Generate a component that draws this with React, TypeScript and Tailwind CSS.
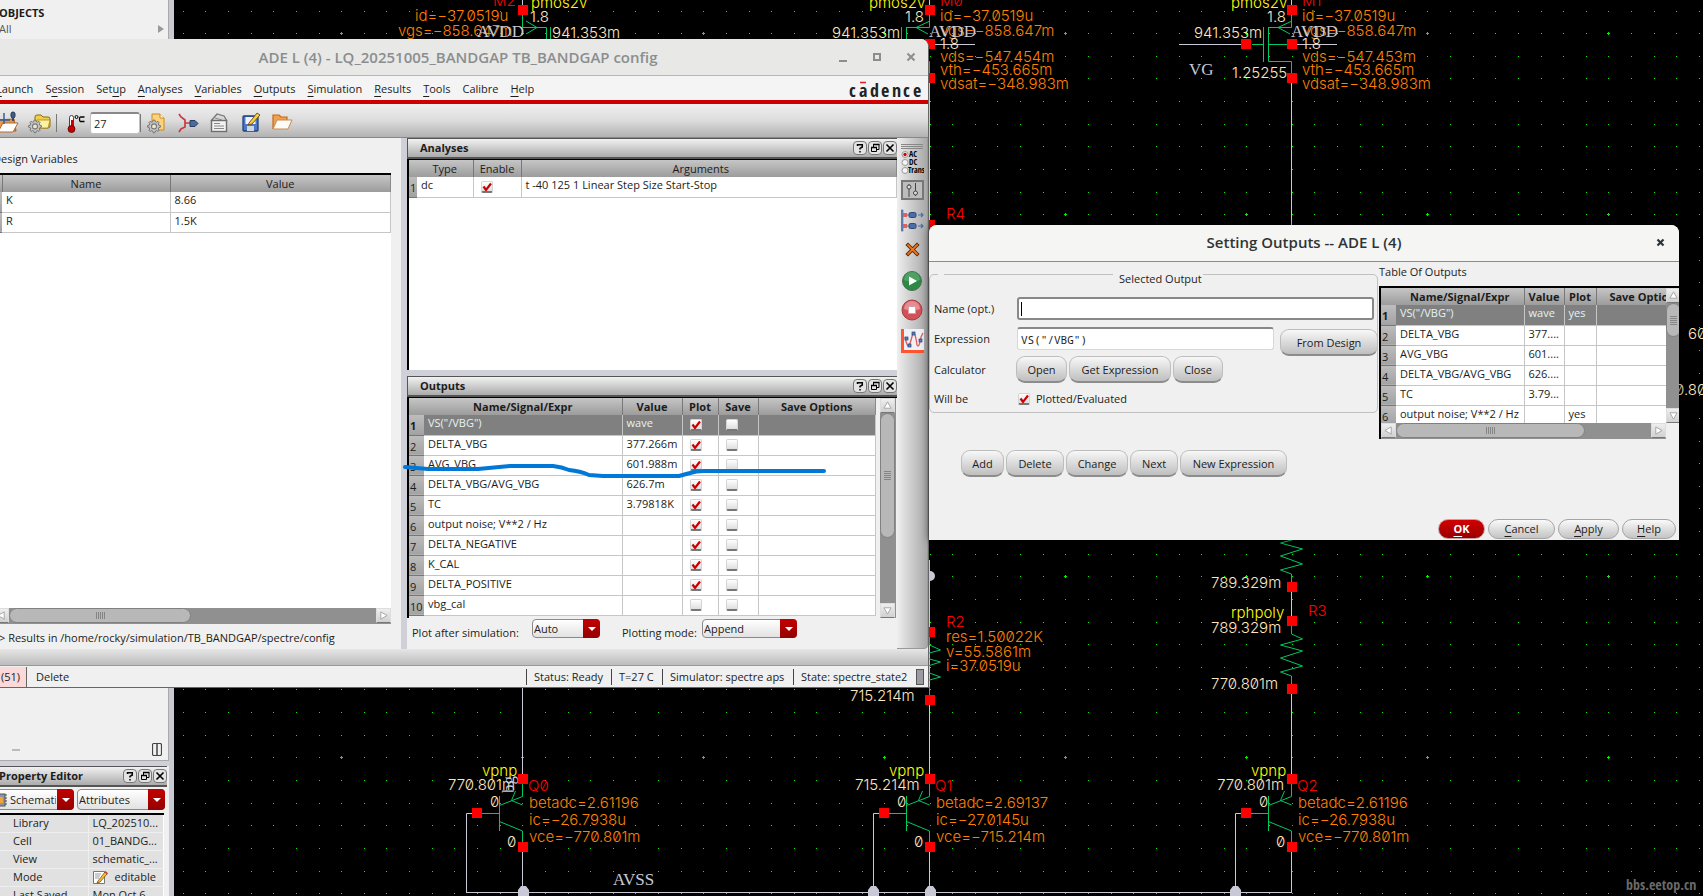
import React from "react";

const HEAD = "bg-gradient-to-b from-[#c6c6c6] to-[#9c9c9c]";
const UI = "font-['Open_Sans','Noto_Sans',sans-serif] text-[11px] leading-4 text-[#1c1c1c]";

/* ---------- schematic ---------- */

const WIRE = "#c8c8d6";
const NET = "#00c864";
const ORANGE = "#ff8000";
const CREAM = "#ffe4c0";
const PITCH = 22.63;

function gridPath() {
  let dots = "";
  let marks = "";
  for (let i = -7; i <= 60; i++) {
    for (let j = -1; j <= 38; j++) {
      const x = Math.round(341.2 + i * PITCH);
      const y = Math.round(33.2 + j * PITCH);
      dots += `M${x} ${y}h1v1h-1z`;
      if (i % 8 === 0 && j % 8 === 0) marks += `M${x - 1} ${y}h3v1h-3zM${x} ${y - 1}h1v3h-1z`;
    }
  }
  return dots + marks;
}

type LabelProps = { x: number; y: number; c: string; children: React.ReactNode };
function Label({ x, y, c, children }: LabelProps) {
  return (
    <text x={x} y={y} fill={c} className="font-['Inter','Noto_Sans',sans-serif] text-[15px] font-light [font-feature-settings:'zero']">
      {children}
    </text>
  );
}
function NetName({ x, y, children }: { x: number; y: number; children: string }) {
  return (
    <text x={x} y={y} fill={WIRE} className="font-['Liberation_Serif',serif] text-[17px]">
      {children}
    </text>
  );
}
function Pin({ x, y }: { x: number; y: number }) {
  return <rect x={x - 5} y={y - 5} width={10} height={10} fill="#ff0000" />;
}
function Dot({ x, y }: { x: number; y: number }) {
  return <path d={`M${x - 5} ${y + 6}v-7l3-4h5l3 4v7z`} fill={WIRE} />;
}
function Bipolar({ x, name, v, beta, ic, vce }: { x: number; name: string; v: string; beta: string; ic: string; vce: string }) {
  return (
    <g>
      <path
        d={`M${x + 0.5} 784V796.5L${x - 22.5} 805.5M${x - 22.5} 796V831M${x - 22.5} 821.5L${x + 0.5} 831V842M${x - 40} 813.5H${x - 22}M${x - 6.5} 791L${x - 10.5} 800.5L${x + 0.5} 805`}
        stroke={NET}
        fill="none"
      />
      <path d={`M${x - 50} 813.5H${x - 55.5}V892.5M${x + 0.5} 852V892`} stroke={WIRE} fill="none" />
      <Label x={x - 40} y={776} c="#ffff00">vpnp</Label>
      <Label x={x - 74} y={790} c={CREAM}>{v}</Label>
      <Label x={x - 32} y={807} c={CREAM}>0</Label>
      <Label x={x - 15} y={847} c={CREAM}>0</Label>
      <Label x={x + 6} y={791} c="#ff0000">{name}</Label>
      <Label x={x + 7} y={808} c={ORANGE}>{beta}</Label>
      <Label x={x + 7} y={825} c={ORANGE}>{ic}</Label>
      <Label x={x + 7} y={842} c={ORANGE}>{vce}</Label>
      <Pin x={x + 1} y={779} />
      <Pin x={x + 1} y={847} />
      <Pin x={x - 45} y={813} />
    </g>
  );
}
function Zigzag({ x, y }: { x: number; y: number }) {
  return (
    <path
      d={`M${x} ${y}V${y + 8}L${x + 11} ${y + 13}L${x - 11} ${y + 19}L${x + 11} ${y + 25}L${x - 11} ${y + 32}L${x + 11} ${y + 40}L${x - 11} ${y + 46}L${x} ${y + 50}V${y + 59}`}
      stroke={NET}
      fill="none"
    />
  );
}
function Mos({ x, name, vds }: { x: number; name: string; vds: string }) {
  return (
    <g>
      <path
        d={`M${x - 0.5} 15V27.5H${x - 23.5}M${x - 23.5} 27V61.5H${x - 0.5}V73M${x - 28.5} 27V62M${x - 40} 44.5H${x - 28}M${x - 23} 44.5H${x - 4}M${x} 21L${x - 14} 27.5L${x - 2} 34`}
        stroke={NET}
        fill="none"
      />
      <path d={`M${x - 0.5} 0V6M${x - 113} 44.5H${x - 50}M${x + 5} 44.5H${x + 45}`} stroke={WIRE} fill="none" />
      <Label x={x - 61} y={8} c="#ffff00">pmos2v</Label>
      <Label x={x - 25} y={22} c={CREAM}>1.8</Label>
      <Label x={x - 98} y={38} c={CREAM}>941.353m</Label>
      <Label x={x + 10} y={6} c="#ff0000">{name}</Label>
      <Label x={x + 10} y={21} c={ORANGE}>id=−37.0519u</Label>
      <Label x={x + 10} y={36} c={ORANGE}>vgs=−858.647m</Label>
      <NetName x={x - 1} y={37}>AVDD</NetName>
      <Label x={x + 10} y={49} c={CREAM}>1.8</Label>
      <Label x={x + 10} y={62} c={ORANGE}>{vds}</Label>
      <Label x={x + 10} y={75} c={ORANGE}>vth=−453.665m</Label>
      <Label x={x + 10} y={89} c={ORANGE}>vdsat=−348.983m</Label>
      <Pin x={x} y={10} />
      <Pin x={x} y={44} />
      <Pin x={x} y={78} />
      <Pin x={x - 46} y={44} />
    </g>
  );
}

function Schematic() {
  return (
    <svg className="h-full w-full" aria-label="Schematic">
      <g transform="translate(-174 0)">
        <path d={gridPath()} fill="#00f000" shapeRendering="crispEdges" />
        <path
          d="M522.5 0V6M522.5 680V776M929.5 83V222M929.5 560V776M1291.5 83V540M1291.5 592V616M1291.5 694V776M466 892.5H1292"
          stroke={WIRE}
          fill="none"
        />
        <path d="M522.5 15V27.5H546.5V60M550.5 27V60M526 21L537 27.5L526 34" stroke={NET} fill="none" />
        <Label x={493} y={6} c="#ff0000">M2</Label>
        <Label x={415} y={21} c={ORANGE}>id=−37.0519u</Label>
        <Label x={398} y={36} c={ORANGE}>vgs=−858.647m</Label>
        <NetName x={477} y={37}>AVDD</NetName>
        <Label x={531} y={8} c="#ffff00">pmos2v</Label>
        <Label x={530} y={22} c={CREAM}>1.8</Label>
        <Label x={552} y={38} c={CREAM}>941.353m</Label>
        <Pin x={523} y={10} />
        <Mos x={930} name="M0" vds="vds=−547.454m" />
        <Mos x={1292} name="M1" vds="vds=−547.453m" />
        <NetName x={1189} y={75}>VG</NetName>
        <Label x={1232} y={78} c={CREAM}>1.25255</Label>
        <Label x={946} y={219} c="#ff0000">R4</Label>
        <Pin x={930} y={225} />

        <circle cx={930} cy={576} r={5} fill={WIRE} />
        <Zigzag x={929.5} y={637} />
        <Label x={946} y={627} c="#ff0000">R2</Label>
        <Label x={946} y={642} c={ORANGE}>res=1.50022K</Label>
        <Label x={946} y={657} c={ORANGE}>v=55.5861m</Label>
        <Label x={946} y={671} c={ORANGE}>i=37.0519u</Label>
        <Pin x={930} y={632} />
        <Pin x={930} y={700} />
        <Label x={850} y={701} c={CREAM}>715.214m</Label>

        <Zigzag x={1291.5} y={524} />
        <Zigzag x={1291.5} y={626} />
        <Label x={1211} y={588} c={CREAM}>789.329m</Label>
        <Label x={1231} y={618} c="#ffff00">rphpoly</Label>
        <Label x={1211} y={633} c={CREAM}>789.329m</Label>
        <Label x={1308} y={616} c="#ff0000">R3</Label>
        <Label x={1211} y={689} c={CREAM}>770.801m</Label>
        <Pin x={1292} y={587} />
        <Pin x={1292} y={621} />
        <Pin x={1292} y={689} />

        <Bipolar x={522} name="Q0" v="770.801m" beta="betadc=2.61196" ic="ic=−26.7938u" vce="vce=−770.801m" />
        <Bipolar x={929} name="Q1" v="715.214m" beta="betadc=2.69137" ic="ic=−27.0145u" vce="vce=−715.214m" />
        <Bipolar x={1291} name="Q2" v="770.801m" beta="betadc=2.61196" ic="ic=−26.7938u" vce="vce=−770.801m" />
        <g transform="translate(514 793) rotate(-90)">
          <NetName x={0} y={0}>bg</NetName>
        </g>
        <NetName x={613} y={885}>AVSS</NetName>
        <Dot x={523} y={891} />
        <Dot x={873} y={891} />
        <Dot x={930} y={891} />
        <Dot x={1235} y={891} />
        <Label x={1688} y={339} c={CREAM}>60</Label>
        <Label x={1675} y={395} c={CREAM}>0.80</Label>
        <text x={1626} y={890} fill="#6a6a6a" className="font-['Open_Sans_Condensed','Roboto_Condensed',sans-serif] text-[14px] font-bold">
          bbs.eetop.cn
        </text>
      </g>
    </svg>
  );
}

/* ---------- shared widgets ---------- */

function Check({ on, label }: { on?: boolean; label: string }) {
  return (
    <span className="relative block size-3">
      <input
        type="checkbox"
        defaultChecked={on}
        aria-label={label}
        className="peer block size-3 appearance-none rounded-[2px] border border-b-2 border-[#d4d4d4] border-b-[#777] bg-gradient-to-b from-white to-[#dedede]"
      />
      <svg viewBox="0 0 12 12" className="pointer-events-none absolute inset-0 hidden size-3 peer-checked:block">
        <path d="M2.5 5.5L5 9L10 2.5" fill="none" stroke="#cc0000" strokeWidth="2.2" />
      </svg>
    </span>
  );
}

function DockButtons() {
  const cls = "flex size-[14px] items-center justify-center rounded-[4px] border border-[#777] bg-[#e4e4e4]";
  return (
    <div className="flex gap-px">
      <button className={cls} aria-label="Help">
        <svg viewBox="0 0 10 10" className="size-[10px]">
          <path d="M2.5 3V1.8H7.3V4L5 5.4V6.6M5 8V9.4" fill="none" stroke="#000" strokeWidth="1.5" />
        </svg>
      </button>
      <button className={cls} aria-label="Float">
        <svg viewBox="0 0 10 10" className="size-[10px]" fill="none" stroke="#000">
          <path d="M3.5 4V1.5H9V6.5H7M1.5 4.5H6.5V8.5H1.5Z" />
          <path d="M3 1.5H9.5M1 4.5H7" strokeWidth="1.6" />
        </svg>
      </button>
      <button className={cls} aria-label="Close">
        <svg viewBox="0 0 10 10" className="size-[10px]">
          <path d="M1.5 1.5L8.5 8.5M8.5 1.5L1.5 8.5" stroke="#000" strokeWidth="1.6" />
        </svg>
      </button>
    </div>
  );
}

function DockHeader({ title }: { title: string }) {
  return (
    <div className="flex h-[21px] shrink-0 items-center justify-between border border-r-0 border-b-2 border-[#555] bg-gradient-to-b from-[#f2f2f2] to-[#ababab] pl-3">
      <h2 className="font-bold">{title}</h2>
      <DockButtons />
    </div>
  );
}

function Combo({ label, value, size, pad }: { label: string; value: string; size: string; pad?: string }) {
  return (
    <span className={`relative block ${size}`}>
      <select
        aria-label={label}
        className={`h-full w-full appearance-none overflow-hidden rounded-[4px] border border-[#8a8a8a] bg-gradient-to-b from-white to-[#e2e2e2] pr-[17px] ${pad ?? "pl-px"}`}
      >
        <option>{value}</option>
      </select>
      <span className="pointer-events-none absolute inset-y-0 right-0 flex w-[17px] items-center justify-center rounded-r-[4px] bg-gradient-to-b from-[#c40000] to-[#940000]">
        <svg viewBox="0 0 8 4" className="h-1 w-2">
          <path d="M0 0H8L4 4Z" fill="#fff" />
        </svg>
      </span>
    </span>
  );
}

const ARROWS: Record<string, string> = {
  left: "M8 1L1 5L8 9Z",
  right: "M2 1L9 5L2 9Z",
  up: "M1 8L5 1L9 8Z",
  down: "M1 2L5 9L9 2Z",
};
function ScrollArrow({ dir }: { dir: "left" | "right" | "up" | "down" }) {
  return (
    <button aria-label={`Scroll ${dir}`} className="flex size-[15px] shrink-0 items-center justify-center border border-[#ddd] border-b-[#777] bg-gradient-to-b from-[#efefef] to-[#d0d0d0]">
      <svg viewBox="0 0 10 10" className="size-[9px]">
        <path d={ARROWS[dir]} fill="#fff" stroke="#a0a0a0" />
      </svg>
    </button>
  );
}
function HScroll({ thumb }: { thumb: string }) {
  return (
    <div className="flex h-4 shrink-0 bg-[#909090]">
      <ScrollArrow dir="left" />
      <div className="min-w-0 flex-1">
        <div className={`flex h-[15px] items-center justify-center rounded-full border border-[#808080] bg-[#b8b8b8] ${thumb}`}>
          <svg className="h-[7px] w-[9px]" viewBox="0 0 9 7">
            <path d="M.5 0V7M2.5 0V7M4.5 0V7M6.5 0V7M8.5 0V7" stroke="#777" strokeWidth=".8" />
          </svg>
        </div>
      </div>
      <ScrollArrow dir="right" />
    </div>
  );
}
function VScroll({ thumb }: { thumb: string }) {
  return (
    <div className="flex w-4 shrink-0 flex-col bg-[#909090]">
      <ScrollArrow dir="up" />
      <div className="min-h-0 flex-1">
        <div className={`flex w-[15px] items-center justify-center rounded-full border border-[#808080] bg-[#b8b8b8] ${thumb}`}>
          <svg className="h-[9px] w-[7px]" viewBox="0 0 7 9">
            <path d="M0 .5H7M0 2.5H7M0 4.5H7M0 6.5H7M0 8.5H7" stroke="#777" strokeWidth=".8" />
          </svg>
        </div>
      </div>
      <ScrollArrow dir="down" />
    </div>
  );
}

function Th({ children, bold, last, pad }: { children?: string; bold?: boolean; last?: boolean; pad?: string }) {
  return (
    <th className={`h-[17px] overflow-hidden border-r py-0 text-center whitespace-nowrap ${pad ?? "px-0"} ${last ? "border-[#8a8a8a]" : "border-[#787878]"} ${bold ? "font-bold" : "font-normal"}`}>
      {children}
    </th>
  );
}
function NumCell({ n, strong }: { n: number; strong?: boolean }) {
  return (
    <td className={`h-5 overflow-hidden border-b border-[#777] bg-gradient-to-b from-[#bdbdbd] to-[#a2a2a2] px-px pt-[3px] pb-0 text-[#1c1c1c] ${strong ? "font-bold" : ""}`}>
      {n}
    </td>
  );
}
const CELL = "h-5 overflow-hidden border-r border-b border-[#c6c6c6] pt-0 pr-0 pb-[3px] pl-1 whitespace-nowrap";

/* ---------- library manager side panel ---------- */

const PROPS: [string, string][] = [
  ["Library", "LQ_202510..."],
  ["Cell", "01_BANDG..."],
  ["View", "schematic_..."],
  ["Mode", "editable"],
  ["Last Saved", "Mon Oct  6"],
];

function SidePanel() {
  return (
    <aside className="flex w-[174px] shrink-0 flex-col border-r-[5px] border-[#c9cad2] bg-[#f0f0f0]">
      <div className="h-[39px] shrink-0 border-r border-[#aaa]">
        <h2 className="-ml-px pt-[5px] font-bold">OBJECTS</h2>
        <div className="flex items-center justify-between pr-1 text-[#555]">
          <span className="-ml-px">All</span>
          <svg viewBox="0 0 6 8" className="h-2 w-[6px]">
            <path d="M0 0V8L6 4Z" fill="#999" />
          </svg>
        </div>
      </div>
      <div className="flex flex-1 items-end justify-between border-r border-b border-[#aaa] pr-[6px] pb-1 pl-3">
        <span className="mb-[5px] h-[2px] w-2 bg-[#bbb]" />
        <svg viewBox="0 0 10 13" className="h-[13px] w-[10px]" fill="none" stroke="#444">
          <rect x=".5" y=".5" width="9" height="12" rx="1.5" strokeWidth="1.2" />
          <path d="M5 1V12" strokeWidth="1.5" />
        </svg>
      </div>
      <div className="h-[5px] shrink-0 bg-[#d0d1d8]" />
      <div className="mr-[2px] -ml-[14px]">
        <DockHeader title="Property Editor" />
      </div>
      <div className="-ml-5 flex h-[26px] shrink-0 gap-[3px] pt-[2px]">
        <span className="relative">
          <Combo label="Property scope" value="Schematic" size="h-[21px] w-[94px]" pad="pl-[29px]" />
          <svg viewBox="0 0 12 14" className="absolute top-1 left-[15px] h-[14px] w-3">
            <rect x="0" y="1" width="10" height="12" fill="#8796a8" stroke="#555" />
            <rect x="2" y="4" width="6" height="6" fill="#f5a13a" />
            <path d="M10 2h2M10 5h2M10 8h2M10 11h2" stroke="#444" />
          </svg>
        </span>
        <Combo label="Property group" value="Attributes" size="h-[21px] w-[88px]" />
      </div>
      <div className="h-[83px] shrink-0 overflow-hidden">
        <table className="w-[164px] table-fixed border-t-2 border-r border-t-black border-r-white bg-[#e1e1e1]">
          <colgroup>
            <col className="w-[88px]" />
            <col />
          </colgroup>
          <tbody>
            {PROPS.map(([k, v]) => (
              <tr key={k}>
                <th className="h-[18px] border-r border-b border-[#eee] p-0 pl-[13px] text-left font-normal whitespace-nowrap">{k}</th>
                <td className="h-[18px] overflow-hidden border-b border-[#eee] p-0 pl-1 whitespace-nowrap">
                  {k === "Mode" ? (
                    <span className="flex items-center gap-[7px]">
                      <svg viewBox="0 0 15 14" className="h-[14px] w-[15px]">
                        <path d="M.5 1.5h11v12H.5z" fill="#fff" stroke="#777" />
                        <path d="M2 4h6M2 6h5M2 8h4" stroke="#999" />
                        <path d="M5 11L12 2L14 4L7 12L4 13Z" fill="#f4c430" stroke="#7a4a1a" strokeWidth=".8" />
                        <path d="M12 1.5L14.5 4" stroke="#d33" strokeWidth="1.6" />
                      </svg>
                      {v}
                    </span>
                  ) : (
                    v
                  )}
                </td>
              </tr>
            ))}
          </tbody>
        </table>
      </div>
    </aside>
  );
}

/* ---------- ADE window ---------- */

const MENU: [string, string, string][] = [
  ["", "L", "aunch"],
  ["S", "e", "ssion"],
  ["Set", "u", "p"],
  ["", "A", "nalyses"],
  ["", "V", "ariables"],
  ["", "O", "utputs"],
  ["", "S", "imulation"],
  ["", "R", "esults"],
  ["", "T", "ools"],
  ["Calibre", "", ""],
  ["", "H", "elp"],
];

const OUTPUTS: [string, string, boolean][] = [
  ['VS("/VBG")', "wave", true],
  ["DELTA_VBG", "377.266m", true],
  ["AVG_VBG", "601.988m", true],
  ["DELTA_VBG/AVG_VBG", "626.7m", true],
  ["TC", "3.79818K", true],
  ["output noise; V**2 / Hz", "", true],
  ["DELTA_NEGATIVE", "", true],
  ["K_CAL", "", true],
  ["DELTA_POSITIVE", "", true],
  ["vbg_cal", "", false],
];

const GEAR = "M8 0h2l.5 2 1.8.8L14 1.700l1.500 1.500-1.100 1.700.8 1.800 2 .5v2l-2 .5-.8 1.800 1.100 1.700L14 14.700l-1.700-1.100-1.800.8-.5 2H8l-.5-2-1.800-.8L4 14.700 2.500 13.200l1.100-1.700-.8-1.800-2-.5v-2l2-.5.8-1.800L2.500 3.200 4 1.700l1.700 1.100L7.500 2Z";
function Gear({ x, y, s }: { x: number; y: number; s: number }) {
  return (
    <g transform={`translate(${x} ${y}) scale(${s})`}>
      <path d={GEAR} fill="#c4c4c4" stroke="#6e6e6e" strokeWidth="1.2" />
      <circle cx="9" cy="8.200" r="3.200" fill="#efe6cf" stroke="#777" strokeWidth="1.4" />
    </g>
  );
}

function ToolButton({ label, w, m, children }: { label: string; w: string; m: string; children: React.ReactNode }) {
  return (
    <button aria-label={label} className={`h-[22px] shrink-0 ${w} ${m}`}>
      <svg className="h-[22px] w-full overflow-visible">{children}</svg>
    </button>
  );
}

function Toolbar() {
  return (
    <div className="flex h-[34px] shrink-0 items-center border-b border-[#888] bg-gradient-to-b from-[#f0f0f0] via-[#dcdcdc] to-[#b2b2b2] pt-1 pl-4">
      <ToolButton label="Choose design" w="w-[19px]" m="">
        <path d="M-4 8L14 7L16 19H-2Z" fill="#e9954a" stroke="#a85a1c" />
        <path d="M-2 20L3 11H18L13 20Z" fill="#fff" stroke="#b66a2c" />
        <path d="M-1 8H10M4 1V12" stroke="#2f5f9e" strokeWidth="1.500" />
        <rect x="11" y="0" width="4" height="6" rx="2" fill="#3d5f8e" stroke="#26374f" />
        <path d="M13 6V9" stroke="#26374f" strokeWidth="1.500" />
      </ToolButton>
      <ToolButton label="Load state" w="w-[23px]" m="ml-[9px]">
        <path d="M7 5Q7 3 9 3H13L15 5H20Q22 5 22 7V14Q22 16 20 16H9Q7 16 7 14Z" fill="#f3cf45" stroke="#8a6d10" />
        <path d="M9 8H22L20 16H8Z" fill="#fff2a0" stroke="#a8861c" strokeWidth=".8" />
        <Gear x={0} y={8} s={0.78} />
      </ToolButton>
      <div className="ml-[5px] h-[18px] w-px bg-[#777]" />
      <svg className="ml-[10px] h-[22px] w-[19px]" aria-label="Temperature">
        <rect x="2.500" y="3.500" width="4" height="13" rx="2" fill="#fff" stroke="#444" />
        <rect x="4" y="8" width="2" height="9" fill="#c00" />
        <circle cx="4.500" cy="17" r="3.500" fill="#c80000" stroke="#5a0000" strokeWidth=".8" />
        <circle cx="9.500" cy="5" r="1.500" fill="none" stroke="#000" />
        <path d="M17.500 5H13.500Q12.500 5 12.500 7Q12.500 9.500 13.500 9.500H17.500" fill="none" stroke="#000" strokeWidth="1.300" />
      </svg>
      <input
        aria-label="Temperature in degrees Celsius"
        defaultValue="27"
        className="ml-1 h-[22px] w-[50px] rounded-[3px] border border-t-2 border-[#c2c2c2] border-t-[#888] bg-white px-[3px]"
      />
      <div className="h-[18px] w-px bg-[#777]" />
      <ToolButton label="Setup analyses" w="w-[18px]" m="ml-[6px]">
        <path d="M5 2H13L17 6V18H5Z" fill="#ffd27a" stroke="#c98a1e" />
        <path d="M13 2V6H17" fill="#fff" stroke="#c98a1e" />
        <Gear x={0} y={8} s={0.78} />
      </ToolButton>
      <ToolButton label="Edit variables" w="w-[20px]" m="ml-[13px]">
        <path d="M1 2L3 5L7 8V15L3 17L1 20M7 11H12" fill="none" stroke="#c53a44" strokeWidth="1.700" />
        <path d="M12 8.500H17L20 11.500L17 14.500H12Z" fill="#4b6a9e" stroke="#2b3d63" />
      </ToolButton>
      <ToolButton label="Netlist" w="w-[18px]" m="ml-[12px]">
        <path d="M1 9L7 2L14 4L17 9" fill="#d8d8d8" stroke="#777" strokeWidth="1.300" />
        <rect x="1.500" y="8.500" width="15" height="11" fill="#f2f2f2" stroke="#6e6e6e" strokeWidth="1.400" />
        <path d="M4 11.500H10M4 14H14M4 16.500H14M5 6L12 8" stroke="#888" />
      </ToolButton>
      <ToolButton label="Save state" w="w-[19px]" m="ml-[14px]">
        <rect x="1" y="4" width="15" height="15" rx="1" fill="#4c78c4" stroke="#22407c" strokeWidth="1.300" />
        <rect x="3.500" y="5" width="10" height="7" fill="#f2f2ff" />
        <rect x="5" y="14" width="7" height="5" fill="#cfd6e6" />
        <path d="M7 11L15 1L18 3L10 12L6 13Z" fill="#f6cf3a" stroke="#6c4a14" strokeWidth=".9" />
      </ToolButton>
      <ToolButton label="Open results" w="w-[20px]" m="ml-[11px]">
        <path d="M1 17V3H7L9 5H15V9" fill="#f0a050" stroke="#c46a18" strokeWidth="1.200" />
        <path d="M1 17L5 8H20L16 17Z" fill="#fbfbf8" stroke="#c98a4c" />
      </ToolButton>
    </div>
  );
}

function SideTools() {
  return (
    <div className="flex w-[31px] shrink-0 flex-col items-center rounded-br-[4px] border-r border-b border-[#999] bg-gradient-to-r from-[#efefef] to-[#a8a8a8] pt-[6px]">
      <svg className="h-[5px] w-[22px]">
        <path d="M0 .5H22M0 2.500H22M0 4.500H22" stroke="#888" />
      </svg>
      <button aria-label="Choose analyses" className="mt-px h-[25px] w-[23px]">
        <svg className="h-[25px] w-[23px]">
          <g fill="#f4f4f4" stroke="#999">
            <circle cx="4" cy="4.500" r="3" />
            <circle cx="4" cy="12.500" r="3" />
            <circle cx="4" cy="20.500" r="3" />
          </g>
          <circle cx="4" cy="4.500" r="1.700" fill="#d00" />
          <g className="font-['Open_Sans_Condensed','Roboto_Condensed',sans-serif] text-[8px] font-bold" fill="#000">
            <text x="8" y="7">AC</text>
            <text x="8" y="15">DC</text>
            <text x="7" y="23">Trans</text>
          </g>
        </svg>
      </button>
      <button aria-label="Edit variables" className="mt-[5px] flex h-[20px] w-[23px] items-center justify-center border-2 border-[#777] bg-[#bdbdbd]">
        <svg className="h-[16px] w-[16px]" fill="#ddd" stroke="#444">
          <path d="M5 2V15M11.500 1V14" />
          <circle cx="5" cy="5" r="2" />
          <circle cx="11.500" cy="11" r="2" />
        </svg>
      </button>
      <button aria-label="Setup outputs" className="mt-[9px] h-[23px] w-[23px]">
        <svg className="h-[23px] w-[23px]">
          <rect x="0" y="1" width="2" height="21" fill="#6a86b8" stroke="#4c6490" strokeWidth=".6" />
          {[6, 17].map((y) => (
            <g key={y}>
              <rect x="2" y={y - 2} width="4" height="4" fill="#e0605c" />
              <rect x="8" y={y - 2.5} width="7" height="5" rx="1.500" fill="#4b6ea8" stroke="#2d4674" />
              <path d={`M6 ${y}H8M17 ${y}H22M20 ${y - 2}L22 ${y}L20 ${y + 2}`} fill="none" stroke="#4b6ea8" strokeWidth="1.200" />
            </g>
          ))}
        </svg>
      </button>
      <button aria-label="Delete" className="mt-[10px] size-[15px]">
        <svg className="size-[15px]">
          <path d="M3 3L12 12M12 3L3 12" stroke="#5a2400" strokeWidth="3.600" strokeLinecap="square" />
          <path d="M3 3L12 12M12 3L3 12" stroke="#e87820" strokeWidth="1.800" strokeLinecap="square" />
        </svg>
      </button>
      <button aria-label="Netlist and run" className="mt-[13px] size-[22px]">
        <svg className="size-[22px]">
          <circle cx="11" cy="11" r="9.500" fill="#2c8a45" stroke="#4d6e55" />
          <path d="M3 10A8 8 0 0 1 19 10Q11 13 3 10Z" fill="#64b078" opacity=".6" />
          <path d="M8 6.500V15.500L16 11Z" fill="#fff" />
        </svg>
      </button>
      <button aria-label="Stop" className="mt-[7px] size-[22px]">
        <svg className="size-[22px]">
          <circle cx="11" cy="11" r="10" fill="#d05258" stroke="#a83c42" />
          <path d="M3 10A8 8 0 0 1 19 10Q11 13 3 10Z" fill="#f4b4b6" opacity=".6" />
          <rect x="7.500" y="7.500" width="7" height="7" fill="#fff" stroke="#d8a0a0" />
        </svg>
      </button>
      <button aria-label="Plot outputs" className="mt-2 h-[24px] w-[23px]">
        <svg className="h-[24px] w-[23px]">
          <rect x="1" y="0" width="22" height="23" fill="#eef1f6" />
          <path d="M1.500 0V22.500H23" fill="none" stroke="#ff5430" strokeWidth="3" />
          <path d="M4 8Q6 18 8 17Q10 12 12 4Q14 2 16 16Q18 20 20 8L22 4" fill="none" stroke="#e05c60" strokeWidth="1.300" />
          <g fill="#5a7ab8" stroke="#2d4674" strokeWidth=".7">
            <rect x="4" y="8" width="3" height="3" />
            <rect x="7" y="15" width="3" height="3" />
            <rect x="11" y="3" width="3" height="3" />
            <rect x="18" y="10" width="3" height="3" />
          </g>
        </svg>
      </button>
    </div>
  );
}

function Logo() {
  return (
    <svg className="h-[19px] w-[74px]" role="img" aria-label="cadence">
      <text y="17" x="1 11 22 33 44 55 65" fill="#222" className="font-['Open_Sans_Condensed','Roboto_Condensed',sans-serif] text-[18px] font-bold">
        cadence
      </text>
      <path d="M12 2.500H18" stroke="#e02020" strokeWidth="1.600" />
    </svg>
  );
}

function VariablesPane() {
  return (
    <section className="flex w-[417px] shrink-0 flex-col">
      <h2 className="mt-[13px] pl-[9px]">Design Variables</h2>
      <div className="mt-[6px] mr-[10px] flex min-h-0 flex-1 flex-col border-t-2 border-black bg-white">
        <table className="w-full table-fixed">
          <colgroup>
            <col className="w-[18px]" />
            <col className="w-[168px]" />
            <col />
          </colgroup>
          <thead>
            <tr className={HEAD}>
              <Th />
              <Th>Name</Th>
              <Th last>Value</Th>
            </tr>
          </thead>
          <tbody>
            {[["K", "8.66"], ["R", "1.5K"]].map(([k, v], i) => (
              <tr key={k}>
                <NumCell n={i + 1} />
                <td className={CELL}>{k}</td>
                <td className={CELL}>{v}</td>
              </tr>
            ))}
          </tbody>
        </table>
        <div className="flex-1" />
        <div className="ml-[10px]">
          <HScroll thumb="w-[182px]" />
        </div>
      </div>
      <p className="mt-[6px] mb-[3px] pl-[15px] whitespace-nowrap">&gt; Results in /home/rocky/simulation/TB_BANDGAP/spectre/config</p>
    </section>
  );
}

function AdeWindow() {
  return (
    <section className="absolute top-[39px] -left-4 flex h-[649px] w-[945px] flex-col overflow-hidden rounded-tr-lg border-r border-b border-[#666] bg-[#f0f0f0]">
      <header className="flex h-[37px] shrink-0 items-center border-b border-[#b8b8b8] bg-[#e8e8e7] pb-px pl-[94px] text-[#8b8e8f]">
        <h1 className="flex-1 text-center text-[15px] leading-5 font-semibold">ADE L (4) - LQ_20251005_BANDGAP TB_BANDGAP config</h1>
        <div className="flex items-center gap-6 pr-3">
          <button aria-label="Minimize">
            <svg className="size-[10px]">
              <path d="M1 9H9" stroke="#8b8e8f" strokeWidth="2" />
            </svg>
          </button>
          <button aria-label="Maximize">
            <svg className="size-[10px]">
              <path d="M2 2H8V8H2Z" fill="none" stroke="#8b8e8f" strokeWidth="2" />
            </svg>
          </button>
          <button aria-label="Close window">
            <svg className="size-[10px]">
              <path d="M1.500 1.500L8.500 8.500M8.500 1.500L1.500 8.500" stroke="#8b8e8f" strokeWidth="2" />
            </svg>
          </button>
        </div>
      </header>
      <nav className="flex h-6 shrink-0 items-center gap-3 bg-[#f4f4f4] pt-[2px] pl-3">
        {MENU.map(([a, u, b]) => (
          <button key={a + u + b} className="whitespace-nowrap">
            {a}
            <span className="underline underline-offset-[3px]">{u}</span>
            {b}
          </button>
        ))}
        <div className="mr-[6px] ml-auto">
          <Logo />
        </div>
      </nav>
      <div className="h-1 shrink-0 bg-[#cc0000]" />
      <Toolbar />
      <div className="flex min-h-0 flex-1">
        <VariablesPane />
        <div className="w-[6px] shrink-0 bg-[#cfd0d8]" />
        <div className="flex min-w-0 flex-1 flex-col">
          <div className="flex h-[232px] flex-col">
            <DockHeader title="Analyses" />
            <div className="flex-1 border-t border-l-2 border-black bg-white">
              <table className="w-full table-fixed">
                <colgroup>
                  <col className="w-2" />
                  <col className="w-[56px]" />
                  <col className="w-[48px]" />
                  <col />
                </colgroup>
                <thead>
                  <tr className={HEAD}>
                    <th />
                    <Th>Type</Th>
                    <Th>Enable</Th>
                    <Th last pad="pl-0 pr-4">Arguments</Th>
                  </tr>
                </thead>
                <tbody>
                  <tr>
                    <NumCell n={1} />
                    <td className={CELL}>dc</td>
                    <td className="h-5 border-r border-b border-[#c6c6c6] pl-[7px]">
                      <Check on label="Enable dc" />
                    </td>
                    <td className={CELL}>t -40 125 1 Linear Step Size Start-Stop</td>
                  </tr>
                </tbody>
              </table>
            </div>
          </div>
          <div className="h-[6px] bg-[#cfd0d8]" />
          <div className="flex min-h-0 flex-1 flex-col">
            <DockHeader title="Outputs" />
            <div className="flex h-[221px] border-t border-l-2 border-black bg-[#f0f0f0] pr-px">
              <div className="min-w-0 flex-1 overflow-hidden">
                <table className="w-full table-fixed bg-white">
                  <colgroup>
                    <col className="w-[15px]" />
                    <col className="w-[198px]" />
                    <col className="w-[60px]" />
                    <col className="w-9" />
                    <col className="w-10" />
                    <col />
                  </colgroup>
                  <thead>
                    <tr className={HEAD}>
                      <th />
                      <Th bold>Name/Signal/Expr</Th>
                      <Th bold>Value</Th>
                      <Th bold>Plot</Th>
                      <Th bold>Save</Th>
                      <Th bold last>Save Options</Th>
                    </tr>
                  </thead>
                  <tbody>
                    {OUTPUTS.map(([name, value, plot], i) => (
                      <tr key={name} className={i === 0 ? "bg-[#808080] text-[#e4f4f0]" : ""}>
                        <NumCell n={i + 1} strong={i === 0} />
                        <td className={CELL}>{name}</td>
                        <td className={CELL}>{value}</td>
                        <td className="h-5 border-r border-b border-[#c6c6c6] pl-[7px]">
                          <Check on={plot} label={`Plot ${name}`} />
                        </td>
                        <td className="h-5 border-r border-b border-[#c6c6c6] pl-[7px]">
                          <Check label={`Save ${name}`} />
                        </td>
                        <td className={CELL} />
                      </tr>
                    ))}
                  </tbody>
                </table>
              </div>
              <div className="ml-1 flex">
                <VScroll thumb="h-[125px]" />
              </div>
            </div>
            <div className="flex items-start pt-px pl-[5px] whitespace-nowrap">
              <span className="w-[120px] pt-[6px]">Plot after simulation:</span>
              <Combo label="Plot after simulation" value="Auto" size="h-[19px] w-[68px]" />
              <span className="ml-[22px] w-[80px] pt-[6px]">Plotting mode:</span>
              <Combo label="Plotting mode" value="Append" size="h-[19px] w-[95px]" />
            </div>
          </div>
        </div>
        <SideTools />
      </div>
      <div className="h-[17px] shrink-0 border-b border-[#999] bg-gradient-to-b from-[#e6e6e6] to-[#bcbcbc]" />
      <footer className="flex h-[21px] shrink-0 items-center pt-px pr-1 whitespace-nowrap">
        <span className="flex h-full w-[43px] items-center justify-end border-r border-[#666] bg-[#fbd9d9] pr-[6px]">(51)</span>
        <span className="flex-1 pl-[9px]">Delete</span>
        <span className="w-[85px] border-l border-[#444] pl-[7px]">Status: Ready</span>
        <span className="w-[51px] border-l border-[#444] pl-[7px]">T=27 C</span>
        <span className="w-[131px] border-l border-[#444] pl-[7px]">Simulator: spectre aps</span>
        <span className="w-[123px] border-l border-[#444] pl-[7px]">State: spectre_state2</span>
        <span className="h-4 w-2 border border-[#555] bg-[#9a9aa2]" />
      </footer>
    </section>
  );
}

/* ---------- outputs dialog ---------- */

const ROWS: [string, string, string][] = [
  ['VS("/VBG")', "wave", "yes"],
  ["DELTA_VBG", "377....", ""],
  ["AVG_VBG", "601....", ""],
  ["DELTA_VBG/AVG_VBG", "626....", ""],
  ["TC", "3.79...", ""],
  ["output noise; V**2 / Hz", "", "yes"],
];

function Push({ children, w }: { children: string; w: string }) {
  return (
    <button className={`h-[27px] rounded-[9px] border border-b-2 border-[#bdbdbd] border-b-[#8c8c8c] bg-gradient-to-b from-[#f8f8f8] to-[#bfbfbf] pt-px whitespace-nowrap ${w}`}>
      {children}
    </button>
  );
}
function Pill({ u, rest, w, primary }: { u: string; rest: string; w: string; primary?: boolean }) {
  const tone = primary
    ? "border-[#c9a0a0] bg-gradient-to-b from-[#d40000] to-[#980000] font-bold text-white"
    : "border-[#a4a4a4] bg-gradient-to-b from-[#fafafa] to-[#c4c4c4]";
  return (
    <button className={`h-5 rounded-full border ${tone} ${w}`}>
      <span className="underline underline-offset-[3px]">{u}</span>
      {rest}
    </button>
  );
}

function Dialog() {
  return (
    <section className="absolute top-[225px] left-[929px] flex h-[315px] w-[750px] flex-col overflow-hidden rounded-t-lg bg-[#f0f0f0] shadow-[0_0_8px_rgba(0,0,0,0.5)]">
      <header className="relative flex h-[37px] shrink-0 items-center justify-center border-b border-[#8e8e88] bg-[#f5f5f4] pb-[2px] text-[#2e3436]">
        <h1 className="text-[15px] leading-5 font-semibold">Setting Outputs -- ADE L (4)</h1>
        <button aria-label="Close dialog" className="absolute right-[14px]">
          <svg className="size-[9px]">
            <path d="M1.500 1.500L7.500 7.500M7.500 1.500L1.500 7.500" stroke="#2e3436" strokeWidth="2.200" />
          </svg>
        </button>
      </header>
      <div className="flex min-h-0 flex-1">
        <div className="flex w-[449px] shrink-0 flex-col">
          <div className="relative mt-3 h-[139px] shrink-0 rounded-[5px] border border-[#c0c0c0] pl-1">
            <span className="absolute -top-px left-2 h-px w-[6px] bg-[#f0f0f0]" />
            <h2 className="absolute -top-1 left-[183px] bg-[#f0f0f0] pr-px pl-[6px]">Selected Output</h2>
            <div className="grid grid-cols-[83px_1fr] items-center pt-[22px]">
              <label htmlFor="out-name">Name (opt.)</label>
              <span className="relative">
                <input id="out-name" className="block h-[23px] w-[357px] rounded-[3px] border-2 border-[#888] bg-white px-[2px] outline-none" />
                <span className="pointer-events-none absolute top-[5px] left-1 h-[14px] w-px bg-black" />
              </span>
            </div>
            <div className="mt-[7px] grid h-[29px] grid-cols-[83px_257px_1fr] items-start">
              <label htmlFor="out-expr" className="pt-1">Expression</label>
              <input
                id="out-expr"
                defaultValue={'VS("/VBG")'}
                className="h-[23px] rounded-[3px] border border-t-2 border-[#d8d8d8] border-t-[#888] bg-white px-[3px] font-['Noto_Sans_Mono','DejaVu_Sans_Mono',monospace]"
              />
              <span className="-mr-1 ml-[6px] pt-[2px]">
                <Push w="w-[98px]">From Design</Push>
              </span>
            </div>
            <div className="flex items-center">
              <span className="w-[82px]">Calculator</span>
              <div className="flex gap-[2px]">
                <Push w="w-[51px]">Open</Push>
                <Push w="w-[102px]">Get Expression</Push>
                <Push w="w-[50px]">Close</Push>
              </div>
            </div>
            <div className="mt-2 flex items-center">
              <span className="w-[84px]">Will be</span>
              <Check on label="Plotted/Evaluated" />
              <span className="ml-[6px]">Plotted/Evaluated</span>
            </div>
          </div>
          <div className="mt-[37px] ml-8 flex gap-[2px]">
            <Push w="w-[43px]">Add</Push>
            <Push w="w-[58px]">Delete</Push>
            <Push w="w-[62px]">Change</Push>
            <Push w="w-[48px]">Next</Push>
            <Push w="w-[107px]">New Expression</Push>
          </div>
        </div>
        <div className="min-w-0 flex-1 pl-px">
          <h2 className="mt-[2px] mb-[6px]">Table Of Outputs</h2>
          <div className="flex h-[153px] border-t-2 border-l-2 border-black">
            <div className="flex min-w-0 flex-1 flex-col">
              <div className="min-h-0 flex-1 overflow-hidden">
                <table className="w-[314px] table-fixed bg-white">
                  <colgroup>
                    <col className="w-[15px]" />
                    <col className="w-32" />
                    <col className="w-10" />
                    <col className="w-8" />
                    <col />
                  </colgroup>
                  <thead>
                    <tr className={HEAD}>
                      <th />
                      <Th bold>Name/Signal/Expr</Th>
                      <Th bold>Value</Th>
                      <Th bold>Plot</Th>
                      <Th bold last>Save Options</Th>
                    </tr>
                  </thead>
                  <tbody>
                    {ROWS.map(([n, v, p], i) => (
                      <tr key={n} className={i === 0 ? "bg-[#808080] text-[#e4f4f0]" : ""}>
                        <NumCell n={i + 1} strong={i === 0} />
                        <td className={CELL}>{n}</td>
                        <td className={CELL}>{v}</td>
                        <td className={CELL}>{p}</td>
                        <td className={CELL} />
                      </tr>
                    ))}
                  </tbody>
                </table>
              </div>
              <HScroll thumb="w-[189px]" />
            </div>
            <div className="flex h-[135px] w-[13px]">
              <VScroll thumb="h-[34px]" />
            </div>
          </div>
        </div>
      </div>
      <div className="mb-px flex shrink-0 justify-end gap-[3px] pr-[3px]">
        <Pill u="O" rest="K" w="w-[47px]" primary />
        <Pill u="C" rest="ancel" w="w-[67px]" />
        <Pill u="A" rest="pply" w="w-[61px]" />
        <Pill u="H" rest="elp" w="w-[54px]" />
      </div>
    </section>
  );
}

export default function App() {
  return (
    <main className={`relative h-screen w-full overflow-hidden bg-black ${UI}`}>
      <div className="flex h-full">
        <SidePanel />
        <div className="min-w-0 flex-1">
          <Schematic />
        </div>
      </div>
      <AdeWindow />
      <Dialog />
      <svg className="pointer-events-none absolute top-[460px] left-[400px] h-[22px] w-[430px]">
        <path
          d="M5 7L28 9H78L110 6H153Q162 7 169 10Q180 11 189 15L203 16H279L290 13Q296 11 304 11H424"
          fill="none"
          stroke="#0078d7"
          strokeWidth="4"
          strokeLinecap="round"
          strokeLinejoin="round"
        />
      </svg>
    </main>
  );
}
